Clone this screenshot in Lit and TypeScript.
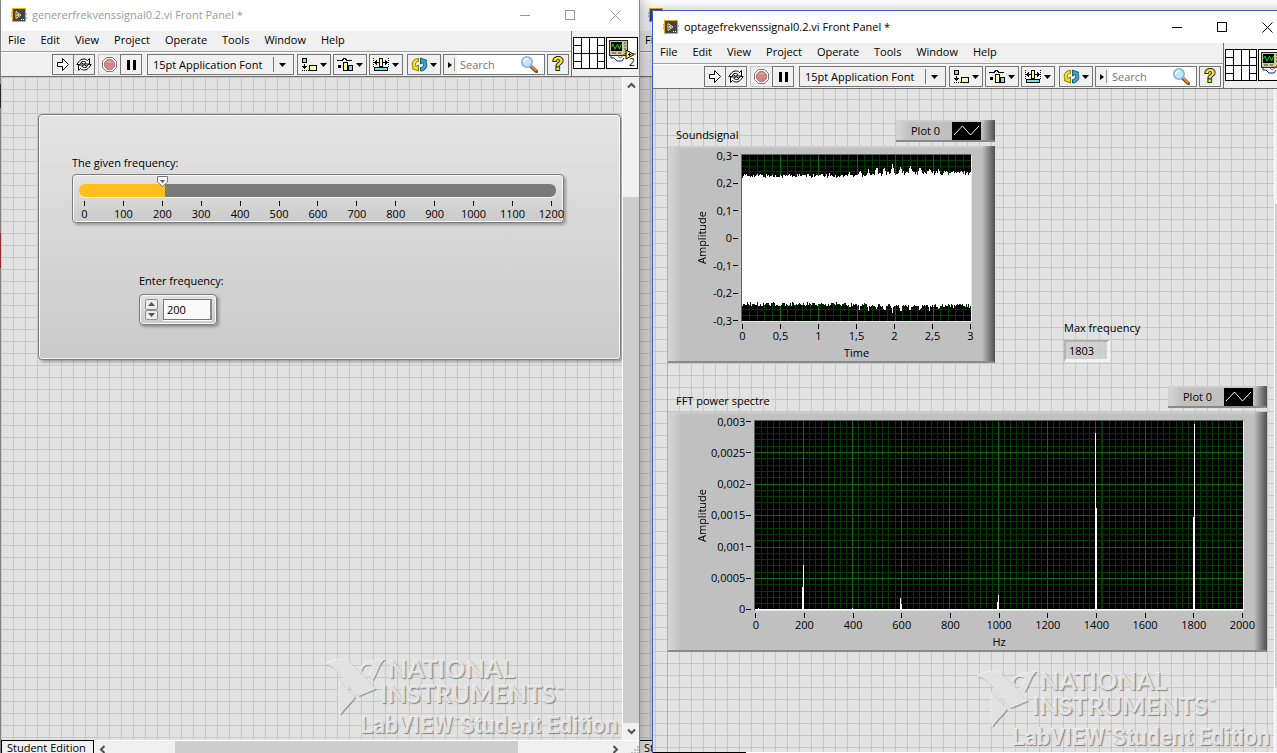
import { LitElement, html, css, svg, nothing } from "lit";
import { customElement, property } from "lit/decorators.js";
import { styleMap } from "lit/directives/style-map.js";

const reset = css`
  :host, * { box-sizing: border-box; }
  button, input, select {
    margin: 0; padding: 0; border: 0; border-radius: 0; background: none;
    font: inherit; color: inherit; appearance: none; outline: none;
  }
  svg { display: block; }
`;

const icons = {
  app: svg`
    <path d="M0 5h3M0 8h3M13 6h3M13 10h3" stroke="#2a7fc0"/>
    <rect x="1.5" y=".5" width="13" height="13" fill="#40464c" stroke="#e8b010"/>
    <path d="M5 3.5v7l5-3.500z" fill="#222" stroke="#ffe27a"/>
    <path d="M7 5.500v3M5.500 7h3" stroke="#fff"/><path d="M10 11.500h1M12 11.500h1" stroke="#fff"/>`,
  run: svg`<path d="M.5 4.500h5v-4l6 6-6 6v-4h-5z" fill="#fff" stroke="#000"/>`,
  loop: svg`
    <path d="M.8 6.500 3 3.500C5 .8 9 0 11.500 2.500L13.500.5V6H8.500L10 4.500C8.500 3 6 3.200 5 4.500L3.800 6.500z" fill="#fff" stroke="#000"/>
    <path d="M15.200 6.500 13 9.500C11 12.200 7 13 4.500 10.500L2.500 12.500V7h5L6 8.500C7.500 10 10 9.800 11 8.500L12.200 6.500z" fill="#fff" stroke="#000"/>
    <path d="M5 4.500 11 8.500" stroke="#000"/>`,
  stop: svg`
    <path d="M4.500.5h6l4 4v6l-4 4h-6l-4-4v-6z" fill="#fff" stroke="#777"/>
    <circle cx="7.500" cy="7.500" r="5.200" fill="#d08888" stroke="#b07474"/>
    <path d="M4 5.500a4.500 4.500 0 0 1 7 0z" fill="#e0a8a8"/>`,
  pause: svg`<path d="M0 0h3v10H0zM6 0h3v10H6z" fill="#000"/>`,
  align: svg`
    <rect x="1.500" y=".5" width="4" height="4" fill="#6fe0f0" stroke="#000"/>
    <path d="M3.500 6v5" stroke="#000"/><path d="M1 8h5l-2.500 3z"/>
    <path d="M1 12.500h8" stroke="#000" stroke-dasharray="1 1"/>
    <rect x="8.500" y="7.500" width="7" height="5" fill="#fdfd9a" stroke="#000"/>`,
  distribute: svg`
    <path d="M.5 3V2h5l2-2 2 2h5v1" fill="none" stroke="#000"/>
    <path d="M1 7h3v3H1z"/><rect x="6.500" y="4.500" width="4" height="8" fill="#fdfd9a" stroke="#000"/>
    <rect x="11.500" y="7.500" width="4" height="5" fill="#6fe0f0" stroke="#000"/>`,
  resize: svg`
    <path d="M.5 0v9M15.500 0v9" stroke="#000" stroke-dasharray="1 1"/>
    <path d="M1 4.500h5M10 4.500h5" stroke="#000"/><path d="M1 4.500 4 2v5zM15 4.500 12 2v5z"/>
    <rect x="6.500" y=".5" width="3" height="8" fill="#fdfd9a" stroke="#000"/>
    <rect x="1.500" y="9.500" width="13" height="3" fill="#6fe0f0" stroke="#000"/>`,
  reorder: svg`
    <path d="M7.500 1.500v3C4.500 4.500 4 7 5 9.500L7.500 8v6L1 11.500 2.200 10.500C-.5 6 2.500 1.500 7.500 1.500z" fill="#f2e020" stroke="#8a7a00"/>
    <path d="M9.500 14V10.500c3 0 3.500-2.500 2.500-5L9.500 7V1L16 3.500 14.800 4.500C17.500 9 14.500 14 9.500 14z" fill="#35a8c8" stroke="#135a78"/>`,
  search: svg`
    <path d="M11 10.500 16.500 15.500" stroke="#8a4a10" stroke-width="3.500" stroke-linecap="round"/>
    <path d="M11 10 16 14.500" stroke="#e89a50" stroke-width="1.500" stroke-linecap="round"/>
    <circle cx="7" cy="6" r="5.200" fill="#bfe6fb" stroke="#88b4d8" stroke-width="1.600"/>
    <path d="M4 6a3 3 0 0 1 4-3" stroke="#fff" stroke-width="1.500" fill="none"/>`,
};

const icon = (body: unknown, w: number, h: number, crisp = false) => html`
  <svg width=${w} height=${h} viewBox="0 0 ${w} ${h}" aria-hidden="true"
    shape-rendering=${crisp ? "crispEdges" : "auto"}>${body}</svg>`;

const caret = html`<svg width="7" height="4" viewBox="0 0 7 4" aria-hidden="true"><path d="M0 0h7L3.500 4z"/></svg>`;

/** Scroll bar with two arrows; grow values set the free space before, the thumb and the space after. */
@customElement("scroll-bar")
export class ScrollBar extends LitElement {
  @property({ type: Boolean, reflect: true }) horizontal = false;
  @property({ attribute: false }) parts = [1, 1, 1];

  static styles = [reset, css`
    :host { display: flex; flex-direction: column; background: #f0f0f0; }
    :host([horizontal]) { flex-direction: row; }
    button { display: grid; place-items: center; width: 16px; height: 17px; flex: none; }
    .space, .thumb { flex-basis: 0; }
    .thumb { background: #cdcdcd; }
  `];

  render() {
    const [before, thumb, after] = this.parts;
    const arrow = (d: string) => html`<svg width="9" height="9" viewBox="0 0 9 9">
      <path d=${d} fill="none" stroke="#505050" stroke-width="2"/></svg>`;
    return html`
      <button aria-label="Scroll back">${arrow(this.horizontal ? "M6.500 1 3 4.500 6.500 8" : "M1 6.500 4.500 3 8 6.500")}</button>
      <div class="space" style=${styleMap({ flexGrow: before })}></div>
      <div class="thumb" style=${styleMap({ flexGrow: thumb })}></div>
      <div class="space" style=${styleMap({ flexGrow: after })}></div>
      <button aria-label="Scroll on">${arrow(this.horizontal ? "M2.500 1 6 4.500 2.500 8" : "M1 2.500 4.500 6 8 2.500")}</button>`;
  }
}

/** One front panel window: title, menus, tool bar, gridded canvas (slot) and scroll bars. */
@customElement("panel-window")
export class PanelWindow extends LitElement {
  @property() heading = "";
  @property({ attribute: false }) menus: string[] = [];
  @property({ type: Boolean }) bare = false;
  @property({ attribute: false }) vertical = [1, 1, 1];

  static styles = [reset, css`
    :host {
      display: flex; flex-direction: column; color: #000;
      border: 1px solid transparent; background: #f0f0f0 padding-box;
    }
    .title { display: flex; align-items: center; height: 32px; padding: 0 4px 0 10px; background: #fff; gap: 5px; flex: none; }
    .title span { flex: 1; padding-bottom: 1px; color: var(--title, #000); white-space: nowrap; }
    .captions { display: flex; gap: 5px; }
    .caption { display: grid; place-items: center; width: 40px; height: 32px; color: var(--title, #000); }
    .head { display: flex; height: 46px; flex: none; border-bottom: 1px solid #6e6e6e; }
    .bars { flex: 1; min-width: 0; }
    .menu { display: flex; gap: 15px; height: 20px; padding: 0 0 2px 7px; align-items: center; }
    .menu button { line-height: 16px; white-space: nowrap; }
    .tools { display: flex; height: 25px; border-top: 1px solid #a0a0a0; padding: 2px 0 0 51px; box-shadow: inset 0 1px #fff; }
    .tools button, .ring, .find { height: 21px; border: 1px solid #757575; display: flex; align-items: center; justify-content: center; flex: none; }
    .tools .run { width: 22px; }
    .tools .loop, .tools .pause { width: 22px; margin-left: -1px; }
    .tools .stop { width: 23px; margin-left: 3px; border-color: #c4c4c4; }
    .tools .tool { width: 34px; gap: 2px; margin-left: 2px; }
    .tools .wide { margin-left: 4px; }
    .ring {
      width: 147px; margin: 0 1px 0 5px; padding-left: 5px; cursor: default;
      background: #f0f0f0 url("data:image/svg+xml,%3Csvg xmlns='http://www.w3.org/2000/svg' width='20' height='15'%3E%3Cpath d='M.5 0v15' stroke='%23757575'/%3E%3Cpath d='M6 6h7l-3.500 4z'/%3E%3C/svg%3E") no-repeat right 0 top 2px;
    }
    .find { width: 102px; margin-left: 2px; justify-content: flex-start; background: linear-gradient(90deg, #f0f0f0 13px, #fff 13px); padding: 0 6px 0 4px; }
    .find i { width: 1px; height: 13px; margin-left: 2px; background: #999; }
    .find input { flex: 1; min-width: 0; margin-left: 5px; height: 17px; }
    .find input::placeholder { color: #757575; opacity: 1; }
    .tools .help { width: 22px; margin-left: 2px; font: bold 18px/19px "Liberation Sans", sans-serif; color: #f4e81c; -webkit-text-stroke: 2px #222; paint-order: stroke fill; }
    .pane { display: flex; gap: 1px; padding: 6px 1px 0 1px; border-left: 1px solid #6e6e6e; flex: none; }
    .body { flex: 1; min-height: 0; display: grid; grid-template: minmax(0, 1fr) auto / minmax(0, 1fr) auto; }
    .canvas {
      position: relative; overflow: hidden;
      background:
        linear-gradient(90deg, #c8c8c8 1px, transparent 1px) var(--gx, 0) 0 / 12px 12px,
        linear-gradient(#c8c8c8 1px, transparent 1px) 0 var(--gy, 0) / 12px 12px, #e2e2e2;
    }
    .v { width: 17px; border-left: 1px solid #fff; }
    .foot { grid-column: 1 / -1; display: flex; height: 18px; border-top: 1px solid #fff; }
    .tab { margin-top: -1px; width: 93px; height: 19px; border: 1px solid #000; padding-left: 5px; line-height: 14px; white-space: nowrap; overflow: hidden; flex: none; }
    .foot scroll-bar { flex: 1; padding-bottom: 1px; }
    .grip { width: 16px; padding: 5px 0 0 8px; }
  `];

  private tools() {
    return html`
      <div class="tools">
        <button class="run" aria-label="Run">${icon(icons.run, 12, 13)}</button>
        <button class="loop" aria-label="Run continuously">${icon(icons.loop, 16, 13)}</button>
        <button class="stop" aria-label="Abort">${icon(icons.stop, 15, 15)}</button>
        <button class="pause" aria-label="Pause">${icon(icons.pause, 9, 10, true)}</button>
        <select class="ring" aria-label="Text settings"><option>15pt Application Font</option></select>
        <button class="tool" aria-label="Align">${icon(icons.align, 17, 13, true)}${caret}</button>
        <button class="tool" aria-label="Distribute">${icon(icons.distribute, 17, 13, true)}${caret}</button>
        <button class="tool" aria-label="Resize">${icon(icons.resize, 17, 13, true)}${caret}</button>
        <button class="tool wide" aria-label="Reorder">${icon(icons.reorder, 17, 15)}${caret}</button>
        <label class="find">
          <svg width="4" height="6" viewBox="0 0 4 6" aria-hidden="true"><path d="M0 0v6l4-3z"/></svg><i></i>
          <input type="text" placeholder="Search" aria-label="Search">${icon(icons.search, 18, 17)}
        </label>
        <button class="help" aria-label="Help">?</button>
      </div>`;
  }

  private pane() {
    return html`
      <div class="pane">
        <svg width="32" height="32" viewBox="0 0 32 32" shape-rendering="crispEdges">
          <path d="M.5.5h31v31H.5zM8.500 0v32M16.500 0v32M24.500 0v32M0 16.500h32M0 8.500h8M0 24.500h8M24 8.500h8M24 24.500h8" fill="#fff" stroke="#000"/>
        </svg>
        <svg width="32" height="32" viewBox="0 0 32 32">
          <rect x=".5" y=".5" width="31" height="31" fill="#fff" stroke="#000"/>
          <rect x="3.500" y="3.500" width="18" height="15" fill="#cdcb98" stroke="#222"/>
          <rect x="5" y="5" width="11" height="9" fill="#000"/>
          <path d="M5.500 10 7 7l2 5 2.500-5 2 5L15.500 7" fill="none" stroke="#18d018"/>
          <path d="M18 6h2M18 9h2M18 12h2M6 16h4M12 16h3" stroke="#444"/>
          <path d="M5 18v3h3l3 3h5l2-3" fill="none" stroke="#102a9a"/>
          <path d="M12 18c3 8 5-4 9-1h9" fill="none" stroke="#e01010"/>
          <path d="M20 13v9l8-4.500z" fill="#ffe838" stroke="#000"/><path d="M22 17.500h3M23.500 16v3" stroke="#000"/>
          <text x="23" y="29" font-size="10" font-family="Open Sans, sans-serif">2</text>
        </svg>
      </div>`;
  }

  render() {
    return html`
      <div class="title">
        ${icon(icons.app, 16, 14)}
        <span>${this.heading}</span>
        <div class="captions">
          <button class="caption" aria-label="Minimize">${icon(svg`<path d="M0 5.500h10" stroke="currentColor"/>`, 11, 11, true)}</button>
          <button class="caption" aria-label="Maximize">${icon(svg`<path d="M.5.5h9v9h-9z" fill="none" stroke="currentColor"/>`, 10, 10, true)}</button>
          <button class="caption" aria-label="Close">${icon(svg`<path d="M.5.5 10.500 10.500M10.500.5.5 10.500" stroke="currentColor"/>`, 11, 11)}</button>
        </div>
      </div>
      <div class="head">
        <div class="bars">
          <div class="menu">${this.menus.map((m) => html`<button>${m}</button>`)}</div>
          ${this.bare ? html`<div class="tools"></div>` : this.tools()}
        </div>
        ${this.bare ? nothing : this.pane()}
      </div>
      <div class="body">
        <div class="canvas"><slot></slot></div>
        <scroll-bar class="v" .parts=${this.vertical}></scroll-bar>
        <div class="foot">
          <div class="tab">Student Edition</div>
          <scroll-bar horizontal .parts=${[64, 341, 88]}></scroll-bar>
          <div class="grip">${icon(svg`<path d="M6 0h2v2H6zM6 3h2v2H6zM3 3h2v2H3zM6 6h2v2H6zM3 6h2v2H3zM0 6h2v2H0z" fill="#c0c0c0"/>`, 8, 8)}</div>
        </div>
      </div>`;
  }
}

/** Embossed vendor mark in the corner of each canvas. */
@customElement("student-mark")
export class StudentMark extends LitElement {
  static styles = [reset, css`
    :host { display: block; width: 293px; color: rgba(244, 244, 244, 0.82); text-shadow: 1px 1px 1px rgba(100, 100, 100, 0.75); white-space: nowrap; }
    .top { display: flex; height: 56px; }
    .name { display: flex; flex-direction: column; gap: 5px; font: bold 25px/20px "Lato", sans-serif; margin-left: -5px; }
    .name div { padding-left: 8px; height: 20px; }
    .name .low { padding-left: 0; }
    .eagle { filter: drop-shadow(1px 1px 0 rgba(120, 120, 120, 0.8)); }
    .edition { font: bold 23px/24px "Roboto", "Liberation Sans", sans-serif; text-align: right; }
    .edition sup { padding: 0 1px; }
    sup { font-size: 8px; line-height: 8px; vertical-align: 10px; padding-left: 1px; }
  `];

  render() {
    return html`
      <div class="top">
        <svg class="eagle" width="60" height="60" viewBox="0 0 60 60" aria-hidden="true">
          <g fill="#efefef" fill-opacity=".85">
            <path d="M0 6C8-1 17 0 24 3L51 31 34 38C26 34 16 10 0 6z"/>
            <path d="M14 22 30 39C27 44 20 50 15 57 13 46 13 32 14 22z"/>
            <path d="M34 10C40 3 50 1 60 1 54 6 53 14 48 22L43 17C45 14 46 10 47 8 42 6 38 7 37 13z"/>
          </g>
        </svg>
        <div class="name"><div>NATIONAL</div><div class="low">INSTRUMENTS<sup>™</sup></div></div>
      </div>
      <div class="edition">LabVIEW<sup>™</sup>Student Edition</div>`;
  }
}

type Column = { x: number; top: number; bottom: number };

/** Waveform graph with caption, plot legend, axes and green grid. */
@customElement("wave-graph")
export class WaveGraph extends LitElement {
  @property() caption = "";
  @property() axis = "";
  @property({ attribute: false }) xs: string[] = [];
  @property({ attribute: false }) ys: string[] = [];
  @property({ attribute: false }) size = [100, 100];
  @property({ attribute: false }) minor = [5, 5];
  @property({ attribute: false }) columns: Column[] = [];

  static styles = [reset, css`
    :host { display: block; }
    .top { display: flex; justify-content: space-between; align-items: flex-end; height: 22px; margin-bottom: 4px; padding-left: 8px; }
    .caption { line-height: 14px; }
    .raised {
      background:
        linear-gradient(90deg, transparent, rgba(0, 0, 0, 0.55)) right / 12px 100% no-repeat,
        linear-gradient(90deg, #d2d2d2 4px, rgba(210, 210, 210, 0) 13px) left / 13px 100% no-repeat,
        linear-gradient(#d0d0d0, #c0c0c0) top / 100% 3px no-repeat, #c0c0c0;
      border-right: 1px solid #555; border-bottom: 2px solid #8a8a8a;
    }
    .legend { display: flex; align-items: center; justify-content: space-between; width: 99px; height: 22px; padding: 1px 13px 0 15px; }
    .box { display: grid; grid-template-columns: 17px auto minmax(0, 1fr); padding: 8px 22px 0 26px; height: var(--box); grid-template-rows: minmax(0, 1fr) 39px; }
    .amp { writing-mode: vertical-rl; transform: rotate(180deg); text-align: center; line-height: 16px; }
    .y { display: flex; flex-direction: column; justify-content: space-between; padding: 1px 0; margin-right: 3px; min-width: 27px; }
    .y div { height: 1px; display: flex; align-items: center; justify-content: flex-end; gap: 1px; }
    .y i { width: 5px; height: 1px; background: #000; }
    .plot { border: 1px solid; border-color: #606060 #e8e8e8 #e8e8e8 #606060; background: #000; min-height: 0; }
    .plot svg { width: 100%; height: 100%; }
    .x { grid-column: 3; padding: 2px 1px 0; }
    .ticks { display: flex; justify-content: space-between; }
    .ticks div { width: 1px; display: flex; flex-direction: column; align-items: center; line-height: 14px; }
    .ticks i { width: 1px; height: 5px; flex: none; background: #000; }
    .axis { text-align: center; line-height: 16px; margin-top: 2px; }
  `];

  render() {
    const [w, h] = this.size;
    const lines = (majors: number, minors: number, len: number, major: boolean) => {
      const total = majors * minors;
      return Array.from({ length: total - 1 }, (_, i) => i + 1)
        .filter((i) => (i % minors === 0) === major)
        .map((i) => Math.floor((i * len) / total) + 0.5);
    };
    const grid = (major: boolean) =>
      lines(this.xs.length - 1, this.minor[0], w, major).map((x) => `M${x} 0V${h}`).join("") +
      lines(this.ys.length - 1, this.minor[1], h, major).map((y) => `M0 ${y}H${w}`).join("");
    return html`
      <div class="top">
        <span class="caption">${this.caption}</span>
        <div class="legend raised">Plot 0
          <svg width="29" height="18" viewBox="0 0 29 18"><path d="M0 0h29v18H0z"/><path d="M2 13 10.500 4 18.500 13 27 4" fill="none" stroke="#fff"/></svg>
        </div>
      </div>
      <div class="box raised">
        <div class="amp">Amplitude</div>
        <div class="y">${this.ys.map((t) => html`<div>${t}<i></i></div>`)}</div>
        <div class="plot">
          <svg viewBox="0 0 ${w} ${h}" preserveAspectRatio="none" shape-rendering="crispEdges">
            <path d=${grid(false)} stroke="#003c00"/>
            <path d=${grid(true)} stroke="#007000"/>
            <path d=${this.columns.map((c) => `M${c.x} ${c.top}h1V${c.bottom}h-1z`).join("")} fill="#fff"/>
          </svg>
        </div>
        <div class="x">
          <div class="ticks">${this.xs.map((t) => html`<div><i></i>${t}</div>`)}</div>
          <div class="axis">${this.axis}</div>
        </div>
      </div>`;
  }
}

const noise = (n: number) => { const v = Math.sin(n * 127.1) * 43758.5453; return v - Math.floor(v); };

/** Dense recording: each pixel column spans the loudest and softest sample. */
const sound: Column[] = Array.from({ length: 228 }, (_, x) => {
  const loud = x > 105 ? Math.exp(-(((x - 150) / 42) ** 2)) : 0.1;
  const beat = Math.max(0, Math.sin(x * 0.72 + 0.4 + Math.sin(x / 11))) ** 2;
  const drift = Math.min(3, Math.max(0, (x - 100) / 18));
  return {
    x,
    top: Math.round(23 - drift - noise(x) * 4 - beat * loud * 8),
    bottom: Math.round(151 + drift * 0.6 - noise(x + 900) * 4 + beat * loud * 7),
  };
});

const spectrum: Column[] = [
  [3, 187], [97, 187], [48, 144], [47, 166], [145, 177], [146, 183], [243, 174], [242, 181],
  [340, 12], [341, 87], [438, 3], [437, 96],
].map(([x, top]) => ({ x, top, bottom: 189 }));
for (let x = 0; x < 487; x++) spectrum.push({ x, top: 188, bottom: 189 });

@customElement("app-root")
export class AppRoot extends LitElement {
  static styles = [reset, css`
    :host {
      display: block; position: relative; height: 100vh; overflow: hidden;
      font: 11px/16px "Open Sans", "Noto Sans", sans-serif; color: #000;
      background: linear-gradient(#999 84px, #333 84px, #333 108px, #999 108px, #999 233px, #a33 233px, #a33 268px, #999 268px);
    }
    panel-window { position: absolute; height: calc(100vh + 8px); width: 640px; }
    .rear { top: -2px; left: 637px; width: 647px; --title: #888; }
    .first { top: -2px; left: 0; --title: #999; border-right-color: #8a8a8a; box-shadow: 2px 0 14px rgba(0, 0, 0, 0.35); }
    .second { top: 10px; left: 652px; border-color: #3f5fd0; --gx: 2px; --gy: 10px; box-shadow: 0 0 12px rgba(0, 0, 0, 0.25); }
    student-mark { position: absolute; right: 4px; bottom: 2px; }
    .margin { position: absolute; left: 14px; top: 0; bottom: 0; width: 1px; background: #b0b0b0; }

    .deco {
      position: absolute; left: 37px; top: 37px; width: 583px; height: 246px; padding: 40px 0 0 33px;
      background: linear-gradient(#e4e4e4, #cacaca);
    }
    .frame { border: 1px solid #7c7c7c; border-radius: 4px; box-shadow: inset 0 0 0 1px #f8f8f8, 2px 2px 3px rgba(0, 0, 0, 0.3); }
    label { display: block; line-height: 16px; }
    .slider { width: 492px; height: 49px; margin-top: 3px; padding: 9px 7px 0 6px; background: linear-gradient(#e4e4e4, #cacaca); }
    .slider input {
      display: block; width: 100%; height: 13px; border-radius: 6px; box-shadow: 0 1px #f6f6f6;
      background: linear-gradient(90deg, #ffbf1a var(--fill), #7a7a7a var(--fill));
    }
    .slider input::-webkit-slider-thumb {
      appearance: none; width: 11px; height: 11px; margin-top: -15px;
      background: url("data:image/svg+xml,%3Csvg xmlns='http://www.w3.org/2000/svg' width='11' height='11'%3E%3Cpath d='M.5 .5h10v5.500l-5 4.500-5-4.500z' fill='%23f6f6f6' stroke='%23777'/%3E%3Cpath d='M3 4h5l-2.500 3z' fill='%23555'/%3E%3C/svg%3E");
    }
    .scale { display: flex; justify-content: space-between; padding: 4px 4px 0 5px; }
    .scale div { width: 1px; display: flex; flex-direction: column; align-items: center; }
    .scale i { width: 1px; height: 5px; flex: none; background: #000; }
    .entry { margin: 50px 0 0 67px; width: 120px; }
    .numeric { display: flex; gap: 5px; width: 78px; height: 31px; margin-top: 5px; padding: 4px 4px 4px 5px; background: linear-gradient(#e4e4e4, #cacaca); }
    .steps { display: flex; flex-direction: column; width: 13px; }
    .steps button { flex: 1; display: grid; place-items: center; border: 1px solid #8f8f8f; border-radius: 2px; background: #ececec; }
    .numeric input { flex: 1; min-width: 0; padding-left: 3px; background: #fafafa; border: 1px solid #777; border-right: 2px solid #8a8a8a; box-shadow: 0 1px #fff; }

    .sound { position: absolute; left: 15px; top: 31px; width: 327px; --box: 217px; }
    .fft { position: absolute; left: 15px; top: 297px; width: 599px; --box: 240px; }
    .max { position: absolute; left: 411px; top: 231px; }
    .max input { display: block; width: 46px; height: 22px; margin-top: 4px; padding-left: 3px; background: rgba(204, 204, 204, 0.8); border: 2px solid; border-color: #b0b0b0 #f2f2f2 #f2f2f2 #b4b4b4; border-width: 2px 3px 3px 2px; }
  `];

  render() {
    const menus = ["File", "Edit", "View", "Project", "Operate", "Tools", "Window", "Help"];
    const value = 200;
    const top = 1200;
    const step = (d: string) => html`<svg width="7" height="4" viewBox="0 0 7 4"><path d=${d} fill="#555"/></svg>`;
    return html`
      <panel-window class="rear" bare .menus=${["File"]}></panel-window>

      <panel-window class="first" heading="genererfrekvenssignal0.2.vi Front Panel *" .menus=${menus} .vertical=${[103, 526, 0]}>
        <student-mark></student-mark>
        <div class="deco frame">
          <label for="given">The given frequency:</label>
          <div class="slider frame">
            <input id="given" type="range" min="0" max=${top} .value=${String(value)}
              style=${styleMap({ "--fill": `${(value / top) * 98 + 1.7}%` })}>
            <div class="scale">${Array.from({ length: 13 }, (_, i) => html`<div><i></i>${i * 100}</div>`)}</div>
          </div>
          <div class="entry">
            <label for="enter">Enter frequency:</label>
            <div class="numeric frame">
              <div class="steps">
                <button aria-label="Increase">${step("M0 4h7L3.500 0z")}</button>
                <button aria-label="Decrease">${step("M0 0h7L3.500 4z")}</button>
              </div>
              <input id="enter" type="text" value="200">
            </div>
          </div>
        </div>
      </panel-window>

      <panel-window class="second" heading="optagefrekvenssignal0.2.vi Front Panel *" .menus=${menus} .vertical=${[98, 484, 47]}>
        <div class="margin"></div>
        <student-mark></student-mark>
        <wave-graph class="sound" caption="Soundsignal" axis="Time"
          .xs=${["0", "0,5", "1", "1,5", "2", "2,5", "3"]}
          .ys=${["0,3", "0,2", "0,1", "0", "-0,1", "-0,2", "-0,3"]}
          .size=${[228, 166]} .minor=${[5, 5]} .columns=${sound}></wave-graph>
        <div class="max">
          <label for="max">Max frequency</label>
          <input id="max" type="text" readonly value="1803">
        </div>
        <wave-graph class="fft" caption="FFT power spectre" axis="Hz"
          .xs=${Array.from({ length: 11 }, (_, i) => String(i * 200))}
          .ys=${["0,003", "0,0025", "0,002", "0,0015", "0,001", "0,0005", "0"]}
          .size=${[487, 189]} .minor=${[8, 5]} .columns=${spectrum}></wave-graph>
      </panel-window>`;
  }
}
